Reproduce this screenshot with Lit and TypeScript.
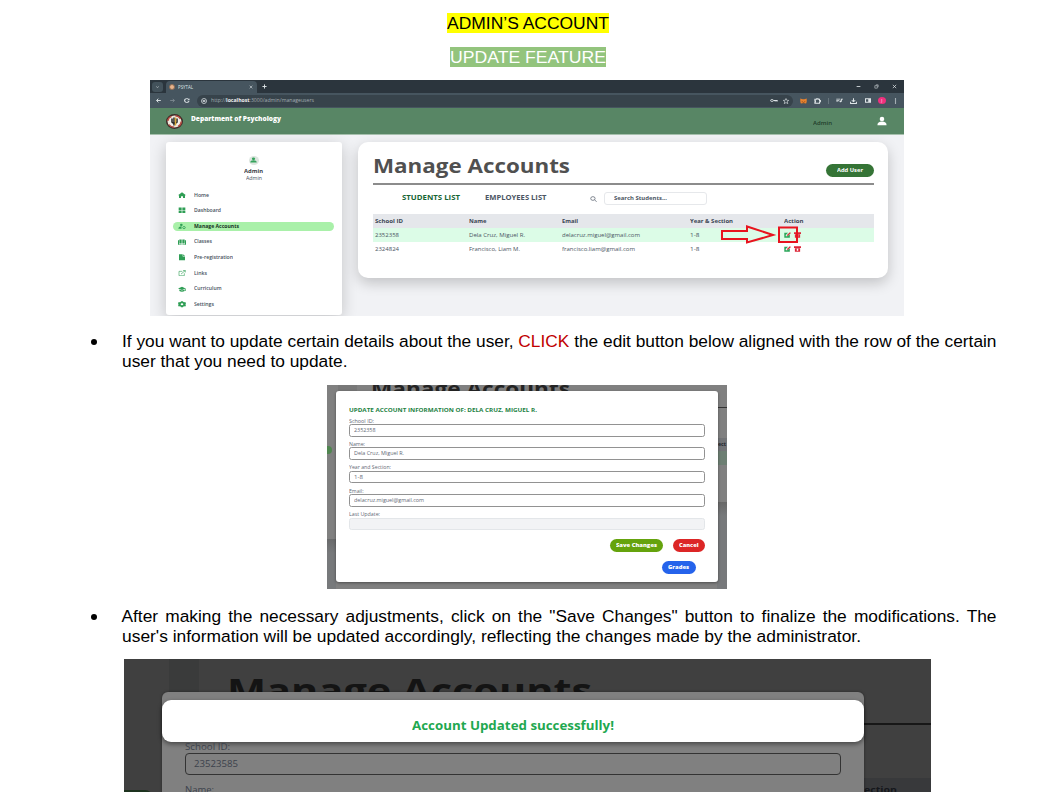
import { LitElement, html, css, svg } from "lit";
import { customElement, property } from "lit/decorators.js";

const ui = css`
  :host { display: block; box-sizing: border-box; font-family: "Open Sans", "Noto Sans", sans-serif; }
  * { box-sizing: border-box; }
  svg { display: block; flex: none; }
`;

/** One line of text condensed or expanded to a given width. */
@customElement("fit-line")
class FitLine extends LitElement {
  @property({ type: Number }) w = 0;
  static styles = css`
    :host { display: block; flex: none; white-space: nowrap; }
    .line { display: inline-block; transform-origin: 0 50%; vertical-align: top; }
  `;
  render() { return html`<span class="line"><slot></slot></span>`; }
  updated() {
    const line = this.renderRoot.querySelector(".line") as HTMLElement;
    line.style.transform = "none";
    this.style.width = this.w + "px";
    const natural = line.getBoundingClientRect().width;
    if (natural) line.style.transform = `scaleX(${this.w / natural})`;
  }
}

const glyphs: Record<string, unknown> = {
  home: svg`<path d="M12 1 0 12h3v11h6v-7h6v7h6V12h3z"/>`,
  dashboard: svg`<path d="M2 2h9v9H2zM13 2h9v9h-9zM2 13h9v9H2zM13 13h9v9h-9z"/>`,
  manage: svg`<circle cx="10" cy="7" r="4"/><path d="M1 21c0-6 4-8 9-8l2 .3A7 7 0 0 0 11 21z"/><circle cx="18" cy="17" r="4" fill="none" stroke="currentColor" stroke-width="2.5"/>`,
  classes: svg`<path d="M0 5h3v14h8v2H0zM24 5h-3v14h-8v2h11zM4 2h7v15H4zM13 2h7v15h-7z"/>`,
  file: svg`<path d="M3 1h11v8h7v14H3zM15.500 1 21 7.500h-5.500z"/>`,
  link: svg`<path d="M13 5H3v16h16V12M9 15 22 2M15 2h7v7" fill="none" stroke="currentColor" stroke-width="2"/>`,
  cap: svg`<path d="M12 3 0 9l12 6 9-4.500V18h2V9zM4 13v5c4 4 12 4 16 0v-5l-8 4z"/>`,
  gear: svg`<path fill-rule="evenodd" d="M9 1h6l1 3 3 1 3-1 2 5-2 3 2 3-2 5-3-1-3 1-1 3H9l-1-3-3-1-3 1-2-5 2-3-2-3 2-5 3 1 3-1zM12 8a4 4 0 1 0 0 8 4 4 0 0 0 0-8z"/>`,
  person: svg`<circle cx="12" cy="7" r="5.500"/><path d="M1 22c0-6 4-9 11-9s11 3 11 9z"/>`,
  search: svg`<g fill="none" stroke="currentColor" stroke-width="2.500"><circle cx="10" cy="10" r="7.500"/><path d="m16 16 7 7"/></g>`,
  edit: svg`<path d="M1 3h13l-8 9v5h5l9-8v14H1z"/><path d="m10 12 10-11 4 3-11 11h-3z"/>`,
  archive: svg`<path fill-rule="evenodd" d="M0 1h24v7H0zM3 9h18v14H3zM10 11v4H7l5 5 5-5h-3v-4z"/>`,
  down: svg`<path d="m6 9 6 6 6-6" fill="none" stroke="currentColor" stroke-width="3"/>`,
  close: svg`<path d="m4 4 16 16M20 4 4 20" fill="none" stroke="currentColor" stroke-width="3.500"/>`,
  plus: svg`<path d="M12 2v20M2 12h20" fill="none" stroke="currentColor" stroke-width="4.500"/>`,
  back: svg`<path d="M23 12H3M11 3l-8 9 8 9" fill="none" stroke="currentColor" stroke-width="4.500"/>`,
  forward: svg`<path d="M1 12h20M13 4l8 8-8 8" fill="none" stroke="currentColor" stroke-width="4"/>`,
  reload: svg`<path d="M20 15a9 9 0 1 1-1-8" fill="none" stroke="currentColor" stroke-width="4.500"/><path d="M22 2v9h-9z"/>`,
  info: svg`<circle cx="12" cy="12" r="10" fill="none" stroke="currentColor" stroke-width="3"/><path d="M7 8h10v3H7zM7 13h10v3H7z"/>`,
  key: svg`<circle cx="6" cy="12" r="4.500" fill="none" stroke="currentColor" stroke-width="3"/><path d="M11 10h12v7h-4v-3h-2v3h-3v-3h-3z"/>`,
  star: svg`<path d="m12 2 3 7 8 .6-6 5 2 8-7-4.500-7 4.500 2-8-6-5L9 9z" fill="none" stroke="currentColor" stroke-width="2.500"/>`,
  fox: svg`<path d="m1 2 8 3h6l8-3v13l-2 7-5-1H8l-5 1-2-7z" fill="#e8822e"/><path d="m5 12 5 2-2 2zM19 12l-5 2 2 2zM9 18h6v3H9z" fill="#6b3d1c"/>`,
  puzzle: svg`<path d="M3 5h6V3h5v2h5v5h3v5h-3v6H3v-5h2v-5H3z" fill="none" stroke="currentColor" stroke-width="3.500"/>`,
  media: svg`<path d="M1 3h14v4H1zM1 9h10v4H1zM1 15h7v3H1zM17 3h7v4h-4v9a4 4 0 1 1-3-4z"/>`,
  download: svg`<path d="M12 1v13M6 9l6 6 6-6M2 15v7h20v-7" fill="none" stroke="currentColor" stroke-width="3.500"/>`,
  panel: svg`<path fill-rule="evenodd" d="M0 1h24v22H0zM4 6v12h9V6z"/>`,
  dots: svg`<circle cx="12" cy="4" r="3"/><circle cx="12" cy="12" r="3"/><circle cx="12" cy="20" r="3"/>`,
  minus: svg`<path d="M3 10h18v4H3z"/>`,
  restore: svg`<path d="M4 8h12v12H4zM9 4h11v11" fill="none" stroke="currentColor" stroke-width="2.500"/>`,
};

const icon = (name: string, w = 7, h = 6) => html`
  <svg width=${w} height=${h} viewBox="0 0 24 24" preserveAspectRatio="none" fill="currentColor">${glyphs[name]}</svg>`;

@customElement("browser-bar")
class BrowserBar extends LitElement {
  static styles = [ui, css`
    :host { height: 28px; font-size: 5px; line-height: 7px; color: #dfe5e8; }
    .strip { height: 13px; background: #2b353d; display: flex; align-items: center; padding: 0 7px 0 2px; }
    .menu { width: 11px; height: 10px; border-radius: 3px; background: #43525b; display: grid; place-items: center; }
    .tab { width: 91px; height: 12px; margin-left: 3px; align-self: flex-end; border-radius: 4px 4px 0 0; background: #46555f; display: flex; align-items: center; padding: 0 4px 0 3px; gap: 3px; }
    .fav { width: 6px; height: 6px; border-radius: 50%; background: #e9b48c; border: 1px solid #8c6c55; }
    .grow { flex: 1; }
    .plus { margin-left: 5px; }
    .win { display: flex; gap: 13px; }
    .tools { height: 15px; background: #46555f; display: flex; align-items: center; padding: 0 6px; }
    .nav { display: flex; gap: 9px; width: 41px; }
    .dim { opacity: .4; }
    .omni { width: 596px; height: 12px; border-radius: 6px; background: #37434b; display: flex; align-items: center; padding: 0 4px; }
    .url { margin-left: 4px; color: #a3adb2; }
    .url b { color: #eef1f2; }
    .gap { width: 5px; }
    .ext { display: flex; align-items: center; gap: 7.200px; margin-left: 7px; }
    .sep { width: 1px; height: 6px; background: #68767e; }
    .me { width: 8px; height: 7px; border-radius: 50%; background: #f0307e; color: #fff; text-align: center; font-size: 4px; }
  `];
  render() {
    return html`
      <div class="strip">
        <div class="menu">${icon("down", 5, 4)}</div>
        <div class="tab"><span class="fav"></span><fit-line w="15">PSYTAL</fit-line><span class="grow"></span>${icon("close", 4, 4)}</div>
        <div class="plus">${icon("plus", 5, 5)}</div>
        <span class="grow"></span>
        <div class="win">${icon("minus", 5, 5)}${icon("restore", 5, 5)}${icon("close", 5, 5)}</div>
      </div>
      <div class="tools">
        <div class="nav">${icon("back", 5, 5)}<span class="dim">${icon("forward", 5, 5)}</span>${icon("reload", 6, 5)}</div>
        <div class="omni">${icon("info", 6, 6)}<fit-line class="url" w="103">http://<b>localhost</b>:3000/admin/manageusers</fit-line>
          <span class="grow"></span>${icon("key", 8, 5)}<span class="gap"></span>${icon("star", 6, 6)}</div>
        <div class="ext">${icon("fox", 7, 6)}${icon("puzzle", 7, 6)}<span class="sep"></span>${icon("media", 7, 5)}${icon("download", 7, 6)}${icon("panel", 6, 5)}<span class="me">J</span>${icon("dots", 5, 6)}</div>
      </div>`;
  }
}

@customElement("accounts-view")
class AccountsView extends LitElement {
  static styles = [ui, css`
    :host { width: 754px; height: 236px; background: #f1f2f5; overflow: hidden; }
    .head { height: 27px; background: #588665; border-bottom: 1px solid #a6c0ad; display: flex; align-items: center; padding: 0 17px 0 16px; }
    .dept { margin: -5px 0 0 8px; color: #fff; font-size: 6px; font-weight: 800; }
    .who { margin: 3px 45px 0 auto; color: #1f3d2b; font-size: 5px; font-weight: 600; }
    .white { color: #fff; }
    .body { display: flex; align-items: flex-start; gap: 16px; padding: 6.500px 16px 0; }
    .side { width: 176.500px; height: 173.500px; border-radius: 3px; background: #fff; box-shadow: 0 4px 16px #0003; padding: 14px 8px 0 7px; color: #46505c; font-size: 5px; line-height: 7px; }
    .me { display: flex; flex-direction: column; align-items: center; }
    .av { width: 10px; height: 9px; border-radius: 50%; background: #dce5df; color: #36a35c; display: grid; place-items: center; }
    .me b { display: block; font-size: 5.500px; margin: 3px 0 0; color: #3c4248; }
    .menu { display: flex; flex-direction: column; gap: 6.650px; margin-top: 9px; }
    .item { height: 9px; border-radius: 5px; display: flex; align-items: center; padding-left: 5px; gap: 8px; font-weight: 600; }
    .item svg { color: #2f9e55; }
    .on { background: #a9f0a9; color: #16331f; font-weight: 700; }
    .card { width: 530px; height: 136.500px; border-radius: 10px; background: #fff; box-shadow: 0 5px 14px #0003; padding: 10px 14px 0 15px; color: #4b5563; font-size: 5.300px; line-height: 8px; }
    .top { display: flex; justify-content: space-between; align-items: flex-end; height: 33px; padding-bottom: 6px; border-bottom: 2px solid #8c8c8c; }
    .title { font-size: 20px; line-height: 28px; font-weight: 700; color: #505050; margin-bottom: -3.500px; }
    .add { width: 48px; height: 13px; border-radius: 7px; background: #357436; color: #fff; display: grid; place-items: center; font-size: 5.300px; font-weight: 700; }
    .tabs { display: flex; align-items: center; height: 29.500px; padding: 0 0 2px 29px; font-size: 6.800px; font-weight: 700; }
    .tabs .a { color: #166534; margin-right: 24.500px; }
    .tabs svg { margin: 2px 6.500px 0 44px; }
    .find { width: 103px; height: 13px; border: 1px solid #e6e8eb; border-radius: 3px; display: flex; align-items: center; padding-left: 9px; font-size: 5.300px; }
    .row { display: grid; grid-template-columns: 93.500px 93.500px 128px 93.500px 1fr; align-items: center; height: 14px; padding-left: 2px; position: relative; }
    .th { height: 13.500px; background: #e5e7eb; font-weight: 700; color: #3c4654; }
    .hit { background: #dcfce7; }
    .act { display: flex; gap: 3px; color: #2ca65b; }
    .act :last-child { color: #dc2637; }
    .mark { position: absolute; left: 346.500px; top: -4px; }
  `];
  private nav: [string, string, number][] = [
    ["home", "Home", 15], ["dashboard", "Dashboard", 27], ["manage", "Manage Accounts", 45], ["classes", "Classes", 18],
    ["file", "Pre-registration", 39], ["link", "Links", 13], ["cap", "Curriculum", 27.5], ["gear", "Settings", 20],
  ];
  private users: [string, string, number, string, number][] = [
    ["2352358", "Dela Cruz, Miguel R.", 56, "delacruz.miguel@gmail.com", 78],
    ["2324824", "Francisco, Liam M.", 51, "francisco.liam@gmail.com", 73],
  ];
  render() {
    return html`
      <browser-bar></browser-bar>
      <div class="head">
        <svg width="17" height="15" viewBox="0 0 34 30"><ellipse cx="17" cy="15" rx="15.500" ry="13.500" fill="#efe9dc" stroke="#3d2a28" stroke-width="3"/><ellipse cx="17" cy="15" rx="13.500" ry="11.500" fill="none" stroke="#b64c42" stroke-width="3" stroke-dasharray="12 8"/><ellipse cx="17" cy="15" rx="10" ry="9" fill="#f4f2ee"/><path d="M12 9v7q0 2 5 2t5-2V9M16 7v16" fill="none" stroke="#222" stroke-width="3"/><path d="M17.500 7h3v16h-3z" fill="#d7aa38"/></svg>
        <fit-line class="dept" w="90">Department of Psychology</fit-line>
        <fit-line class="who" w="19">Admin</fit-line>
        <span class="white">${icon("person", 10, 10)}</span>
      </div>
      <div class="body">
        <div class="side">
          <div class="me"><span class="av">${icon("person", 7, 6)}</span><b><fit-line w="19">Admin</fit-line></b><fit-line w="16">Admin</fit-line></div>
          <div class="menu">${this.nav.map(([g, t, w]) => html`
            <div class="item ${g === "manage" ? "on" : ""}">${icon(g, 8, 6.5)}<fit-line w=${w}>${t}</fit-line></div>`)}</div>
        </div>
        <div class="card">
          <div class="top"><fit-line class="title" w="197">Manage Accounts</fit-line><div class="add"><fit-line w="26">Add User</fit-line></div></div>
          <div class="tabs"><fit-line class="a" w="58">STUDENTS LIST</fit-line><fit-line w="61.5">EMPLOYEES LIST</fit-line>${icon("search", 7, 6)}
            <div class="find"><fit-line w="53">Search Students...</fit-line></div></div>
          <div class="row th"><fit-line w="28">School ID</fit-line><fit-line w="17.5">Name</fit-line><fit-line w="16">Email</fit-line><fit-line w="43">Year &amp; Section</fit-line><fit-line w="19.5">Action</fit-line></div>
          ${this.users.map(([id, n, nw, m, mw], i) => html`
            <div class="row ${i ? "" : "hit"}"><fit-line w="24">${id}</fit-line><fit-line w=${nw}>${n}</fit-line><fit-line w=${mw}>${m}</fit-line><fit-line w="9.5">1-8</fit-line>
              <div class="act">${icon("edit", 7, 6)}${icon("archive", 7, 6)}</div>
              ${i ? "" : html`<svg class="mark" width="80" height="21" viewBox="0 0 80 21" fill="none" stroke="#e8141f" stroke-width="2"><path d="M2 7h25V2.500L53 11 27 18.500V15H2z"/><path d="M59 3.500h18v14.500H59z"/></svg>`}
            </div>`)}
        </div>
      </div>`;
  }
}

@customElement("update-dialog")
class UpdateDialog extends LitElement {
  static styles = [ui, css`
    :host { width: 400px; height: 204px; background: #808080; overflow: hidden; position: relative; padding: 5.500px 9px 0 8.500px; }
    .under { position: absolute; }
    .strip { left: 11px; top: 0; width: 19px; height: 8px; background: #787878; }
    .ghost { left: 44px; top: -10px; font-size: 20px; line-height: 28px; font-weight: 700; color: #242424; }
    .floor { left: 0; top: 154px; width: 9px; height: 50px; background: linear-gradient(#696a6b, #77797b 14px); }
    .nub { left: -6px; top: 61px; width: 11px; height: 8px; border-radius: 4px; background: #4f864f; }
    .rule { right: 0; top: 22px; width: 10px; height: 1px; background: #333; }
    .head { right: 0; top: 53px; width: 10px; height: 13px; background: #727477; font-size: 5.300px; line-height: 13px; font-weight: 700; color: #20242b; padding-left: 1px; }
    .green { right: 0; top: 66px; width: 10px; height: 14px; background: #6d7f73; }
    .foot { right: 0; top: 117px; width: 10px; height: 87px; background: linear-gradient(#686868, #77797b 14px); }
    .box { position: relative; height: 191.500px; border-radius: 3px; background: #fff; box-shadow: 0 1px 3px #0006; padding: 15.500px 13px 0; color: #5f6875; font-size: 5px; line-height: 7px; }
    .title { color: #1c8142; font-weight: 700; font-size: 5.600px; line-height: 8px; margin-bottom: 3.500px; }
    .field { height: 23.400px; }
    .in { height: 12.500px; margin-top: -.500px; border: 1px solid #929292; border-radius: 2.500px; display: flex; align-items: center; padding-left: 4px; background: #fff; }
    .off { background: #f2f3f5; border-color: #e3e6e9; }
    .btns { display: flex; justify-content: flex-end; gap: 9.500px; margin-top: 5px; }
    .b { height: 12.500px; border-radius: 7px; color: #fff; font-weight: 800; display: grid; place-items: center; }
    .save { width: 53.500px; background: #65a30d; }
    .cancel { width: 32.500px; background: #dc2626; }
    .grades { width: 33.500px; background: #2563eb; margin-right: 9.500px; }
    .second { margin-top: 9.500px; }
  `];
  private fields: [string, number, string, number][] = [
    ["School ID:", 25, "2352358", 21.5], ["Name:", 16, "Dela Cruz, Miguel R.", 50], ["Year and Section:", 42, "1-8", 9],
    ["Email:", 14.5, "delacruz.miguel@gmail.com", 70], ["Last Update:", 31, "", 0],
  ];
  render() {
    return html`
      <div class="under strip"></div><fit-line class="under ghost" w="199">Manage Accounts</fit-line>
      <div class="under floor"></div><div class="under nub"></div><div class="under rule"></div>
      <div class="under head"><fit-line w="8">ect</fit-line></div><div class="under green"></div><div class="under foot"></div>
      <div class="box">
        <fit-line class="title" w="188">UPDATE ACCOUNT INFORMATION OF: DELA CRUZ, MIGUEL R.</fit-line>
        ${this.fields.map(([l, lw, v, vw]) => html`<div class="field"><fit-line w=${lw}>${l}</fit-line>
          <div class="in ${v ? "" : "off"}">${v ? html`<fit-line w=${vw}>${v}</fit-line>` : ""}</div></div>`)}
        <div class="btns"><div class="b save"><fit-line w="41">Save Changes</fit-line></div><div class="b cancel"><fit-line w="19.5">Cancel</fit-line></div></div>
        <div class="btns second"><div class="b grades"><fit-line w="21">Grades</fit-line></div></div>
      </div>`;
  }
}

@customElement("success-view")
class SuccessView extends LitElement {
  static styles = [ui, css`
    :host { width: 807px; height: 133px; background: #404040; overflow: hidden; position: relative; padding: 33px 67.500px 0 38px; }
    .under { position: absolute; }
    .strip { left: 45px; top: 0; width: 30px; height: 40px; background: #3a3b3b; }
    .ghost { left: 103px; top: 6px; font-size: 34px; line-height: 50px; font-weight: 700; color: #141414; }
    .rule { right: 0; top: 63.500px; width: 70px; height: 2px; background: #171717; }
    .head { right: 0; top: 119px; width: 68px; height: 14px; background: #38393b; }
    .sect { left: 740px; top: 124px; font-size: 9.500px; line-height: 14px; font-weight: 700; color: #15171b; }
    .nub { left: -8px; top: 131px; width: 37px; height: 16px; border-radius: 8px; background: #1d331f; }
    .box { position: relative; height: 120px; border-radius: 6px; background: #808080; box-shadow: 0 0 3px #0006; padding-top: 8px; color: #3c424c; font-size: 9.200px; line-height: 14px; font-weight: 500; }
    .toast { height: 42px; border-radius: 9px; background: #fff; box-shadow: 0 2px 5px #0007; display: grid; place-items: center; padding-top: 10px; color: #1fa850; font-size: 11.600px; line-height: 16px; font-weight: 700; }
    .form { padding: 0 23px; margin-top: -2px; }
    .in { height: 21.500px; margin: -1px 0 8px; border: 1.500px solid #333; border-radius: 4px; display: flex; align-items: center; padding-left: 8px; }
  `];
  render() {
    return html`
      <div class="under strip"></div><fit-line class="under ghost" w="365">Manage Accounts</fit-line>
      <div class="under rule"></div><div class="under head"></div><fit-line class="under sect" w="33">ection</fit-line><div class="under nub"></div>
      <div class="box">
        <div class="toast"><fit-line w="202">Account Updated successfully!</fit-line></div>
        <div class="form"><fit-line w="45">School ID:</fit-line><div class="in"><fit-line w="44">23523585</fit-line></div><fit-line w="29">Name:</fit-line></div>
      </div>`;
  }
}

@customElement("app-root")
class AppRoot extends LitElement {
  static styles = css`
    :host { display: block; height: 808px; background: #fff; overflow: hidden; color: #000; font: 17.330px/20px "Liberation Sans", Arial, sans-serif; }
    .page { height: 792px; box-sizing: border-box; overflow: hidden; display: flex; flex-direction: column; padding-top: 13px; }
    .hl { margin: 0 0 14px 447px; align-self: flex-start; background: #ff0; height: 20px; }
    .green { background: #93c47d; color: #fff; margin: 0 0 13px 450px; }
    .one { margin-left: 150px; flex: none; }
    .two { margin-left: 327px; flex: none; }
    .three { margin-left: 124px; flex: none; }
    .li { display: grid; grid-template-columns: 31px 875px; margin: 15px 0 14px 90.500px; flex: none; }
    .dot { width: 6.500px; height: 6.500px; border-radius: 50%; background: #000; margin-top: 7.500px; }
    .last { margin: 17px 0 13px 90.500px; }
    .j { text-align: justify; text-align-last: justify; white-space: nowrap; }
    .red { color: #c00000; }
  `;
  render() {
    return html`<div class="page">
      <fit-line class="hl" w="162">ADMIN’S ACCOUNT</fit-line>
      <fit-line class="hl green" w="156">UPDATE FEATURE</fit-line>
      <accounts-view class="one"></accounts-view>
      <div class="li"><span class="dot"></span><div>
        <fit-line w="874.5">If you want to update certain details about the user, <span class="red">CLICK</span> the edit button below aligned with the row of the certain</fit-line>
        <fit-line w="225.5">user that you need to update.</fit-line></div></div>
      <update-dialog class="two"></update-dialog>
      <div class="li last"><span class="dot"></span><div>
        <div class="j">After making the necessary adjustments, click on the "Save Changes" button to finalize the modifications. The</div>
        <fit-line w="739">user's information will be updated accordingly, reflecting the changes made by the administrator.</fit-line></div></div>
      <success-view class="three"></success-view>
    </div>`;
  }
}
